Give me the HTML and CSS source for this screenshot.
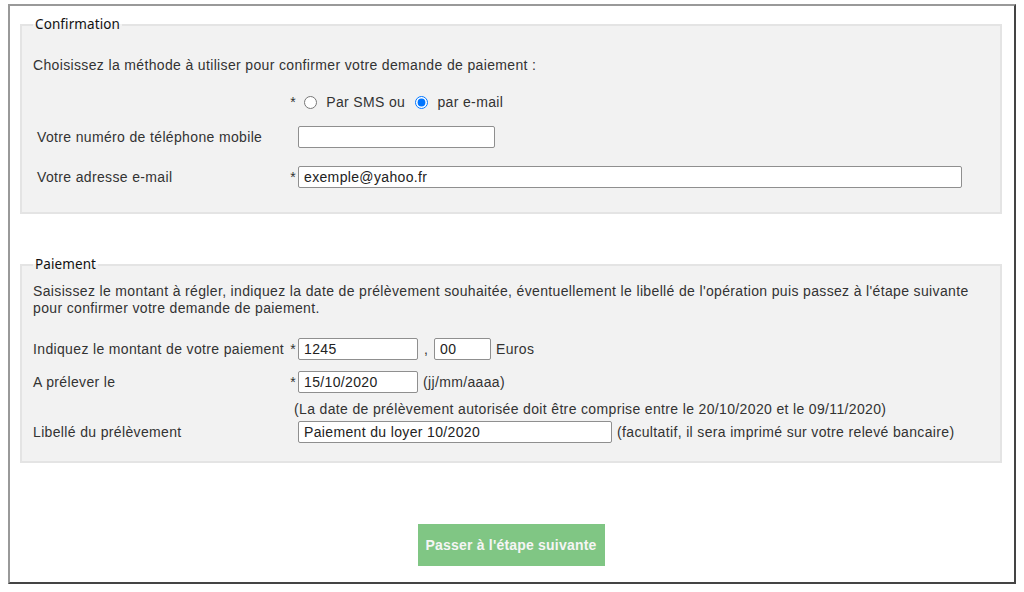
FILE: index.html
```html
<!DOCTYPE html>
<html lang="fr">
<head>
    <meta charset="utf-8">
    <title>Demande de paiement</title>
    <link rel="stylesheet" href="styles.css">
</head>
<body>

    <div class="frame">
        <form id="paymentForm">
            <fieldset class="box box-confirm">
                <legend>Confirmation</legend>
                <p class="intro">Choisissez la méthode à utiliser pour confirmer votre demande de paiement :</p>

                <div class="row row-radio">
                    <span class="label"></span>
                    <span class="req">*</span>
                    <label class="choice"><input type="radio" name="method" value="sms"> Par SMS ou</label>
                    <label class="choice"><input type="radio" name="method" value="mail" checked> par e-mail</label>
                </div>

                <div class="row row-phone">
                    <label class="label" for="phone">Votre numéro de téléphone mobile</label>
                    <span class="req"></span>
                    <input type="tel" id="phone" class="field w-phone">
                </div>

                <div class="row row-mail">
                    <label class="label" for="email">Votre adresse e-mail</label>
                    <span class="req">*</span>
                    <input type="email" id="email" class="field w-mail" value="exemple@yahoo.fr">
                </div>
            </fieldset>

            <fieldset class="box box-pay">
                <legend>Paiement</legend>
                <p class="intro">Saisissez le montant à régler, indiquez la date de prélèvement souhaitée, éventuellement le libellé de l'opération puis passez à l'étape suivante pour confirmer votre demande de paiement.</p>

                <div class="row row-amount">
                    <label class="label" for="amount">Indiquez le montant de votre paiement</label>
                    <span class="req">*</span>
                    <input type="text" id="amount" class="field w-amount" value="1245">
                    <span class="comma">,</span>
                    <input type="text" id="cents" class="field w-cents" value="00">
                    <span class="suffix">Euros</span>
                </div>

                <div class="row row-date">
                    <label class="label" for="date">A prélever le</label>
                    <span class="req">*</span>
                    <input type="text" id="date" class="field w-date" value="15/10/2020">
                    <span class="suffix">(jj/mm/aaaa)</span>
                </div>

                <p class="note">(La date de prélèvement autorisée doit être comprise entre le 20/10/2020 et le 09/11/2020)</p>

                <div class="row row-wording">
                    <label class="label" for="wording">Libellé du prélèvement</label>
                    <span class="req"></span>
                    <input type="text" id="wording" class="field w-wording" value="Paiement du loyer 10/2020">
                    <span class="suffix">(facultatif, il sera imprimé sur votre relevé bancaire)</span>
                </div>
            </fieldset>

            <div class="actions">
                <button type="button" class="next">Passer à l'étape suivante</button>
            </div>
        </form>
    </div>

</body>
</html>
```

FILE: styles.css
```css
body {
    margin: 0;
    background-color: #fff;
    font-family: 'Liberation Sans', Arial, sans-serif;
    font-size: 14px;
    letter-spacing: 0.35px;
    color: #333;
}

.frame {
    box-sizing: border-box;
    width: 1008px;
    height: 580px;
    margin: 4px 0 0 8px;
    padding: 0 12px 0 10px;
    border: 2px solid #444;
    border-top-color: #999;
    border-left-color: #999;
}

.box {
    margin: 10px 0 0;
    padding: 0 11px 24px;
    min-width: 0;
    border: 2px solid #e4e4e4;
    background-color: #f2f2f2;
}

.box legend {
    padding: 0 2px;
    font-family: 'Noto Sans', sans-serif;
    font-size: 13.5px;
    letter-spacing: 0.1px;
    line-height: 17px;
    color: #111;
}

.intro {
    margin: 24px 0 0;
    line-height: 17px;
}

.row {
    display: flex;
    align-items: center;
    height: 22px;
    line-height: 17px;
}

.label {
    box-sizing: border-box;
    width: 255px;
    flex: none;
    white-space: nowrap;
}

.req {
    width: 8px;
    flex: none;
    margin-right: 2px;
    text-align: right;
}

.choice input {
    margin: 0 5px 0 6px;
    vertical-align: -2px;
}

.choice + .choice {
    margin-left: 4px;
}

.field {
    box-sizing: border-box;
    height: 22px;
    margin: 0;
    padding: 0 5px;
    border: 1px solid #8f8f8f;
    border-radius: 2px;
    background-color: #fff;
    font-family: 'Liberation Sans', Arial, sans-serif;
    font-size: 14px;
    letter-spacing: 0.35px;
    color: #222;
    flex: none;
}

.w-phone { width: 197px; }
.w-mail { width: 664px; }
.w-amount { width: 120px; }
.w-cents { width: 57px; }
.w-date { width: 120px; }
.w-wording { width: 314px; }

.comma {
    width: 16px;
    text-align: center;
}

.suffix {
    margin-left: 5px;
    white-space: nowrap;
}

/* Confirmation block */
.box-confirm .label {
    padding-left: 4px;
}

.row-radio {
    margin-top: 17px;
}

.row-phone {
    margin-top: 13px;
}

.row-mail {
    margin-top: 18px;
}

/* Paiement block */
.box-pay {
    margin-top: 42px;
    padding-bottom: 18px;
}

.box-pay .intro {
    margin-top: 10px;
}

.row-amount {
    margin-top: 21px;
}

.row-date {
    margin-top: 11px;
}

.note {
    margin: 8px 0 0;
    padding-left: 261px;
    line-height: 17px;
}

.row-wording {
    margin-top: 3px;
}

.actions {
    display: flex;
    justify-content: center;
    margin-top: 61px;
}

.next {
    width: 187px;
    height: 42px;
    border: none;
    background-color: #80c684;
    color: #f5f5f5;
    font-family: 'Liberation Sans', Arial, sans-serif;
    font-size: 14px;
    font-weight: bold;
    letter-spacing: 0.2px;
    cursor: pointer;
}
```
